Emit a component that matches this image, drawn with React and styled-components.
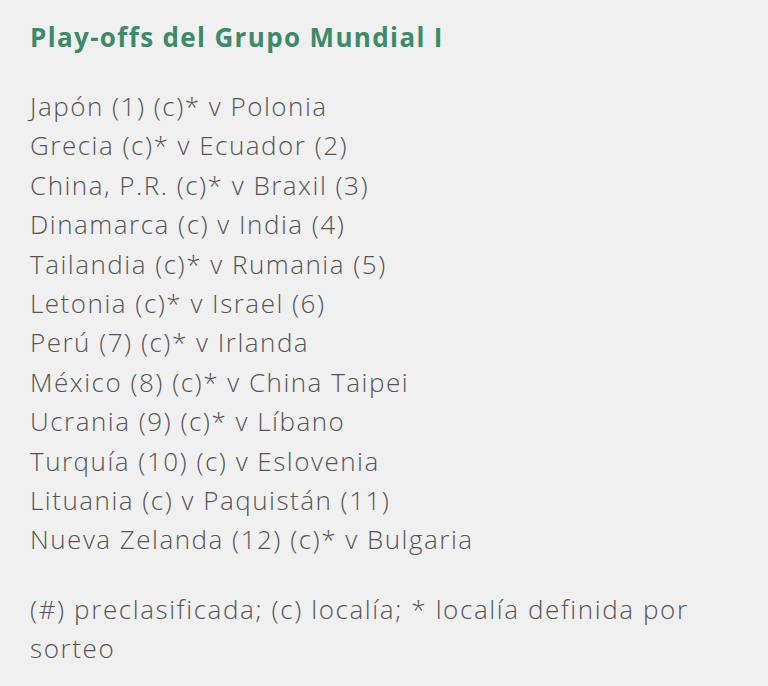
import React from "react";
import styled, { createGlobalStyle } from "styled-components";

const GlobalStyle = createGlobalStyle`
  html, body {
    margin: 0;
    padding: 0;
    background: #f0f0f0;
  }
`;

const Page = styled.div`
  width: 768px;
  height: 686px;
  box-sizing: border-box;
  padding: 18px 30px 0;
  background: #f0f0f0;
  font-family: "Open Sans", sans-serif;
  color: #555555;
  overflow: hidden;
`;

const Title = styled.h2`
  margin: 0 0 31px;
  font-size: 26px;
  line-height: 38px;
  font-weight: 700;
  letter-spacing: 1.35px;
  color: #3d8a68;
`;

const MatchList = styled.ul`
  list-style: none;
  margin: 0 0 30px;
  padding: 0;
`;

const Match = styled.li`
  font-size: 26px;
  line-height: 39.4px;
  font-weight: 300;
  letter-spacing: 1.5px;
`;

const Legend = styled.p`
  margin: 0;
  max-width: 690px;
  font-size: 26px;
  line-height: 39.5px;
  font-weight: 300;
  letter-spacing: 1.6px;
`;

const matches = [
    "Japón (1) (c)* v Polonia",
    "Grecia (c)* v Ecuador (2)",
    "China, P.R. (c)* v Braxil (3)",
    "Dinamarca (c) v India (4)",
    "Tailandia (c)* v Rumania (5)",
    "Letonia (c)* v Israel (6)",
    "Perú (7) (c)* v Irlanda",
    "México (8) (c)* v China Taipei",
    "Ucrania (9) (c)* v Líbano",
    "Turquía (10) (c) v Eslovenia",
    "Lituania (c) v Paquistán (11)",
    "Nueva Zelanda (12) (c)* v Bulgaria",
];

export default function App() {
    return (
        <>
            <GlobalStyle />
            <Page>
                <Title>Play-offs del Grupo Mundial I</Title>
                <MatchList>
                    {matches.map((m) => (
                        <Match key={m}>{m}</Match>
                    ))}
                </MatchList>
                <Legend>
                    (#) preclasificada; (c) localía; * localía definida por sorteo
                </Legend>
            </Page>
        </>
    );
}
